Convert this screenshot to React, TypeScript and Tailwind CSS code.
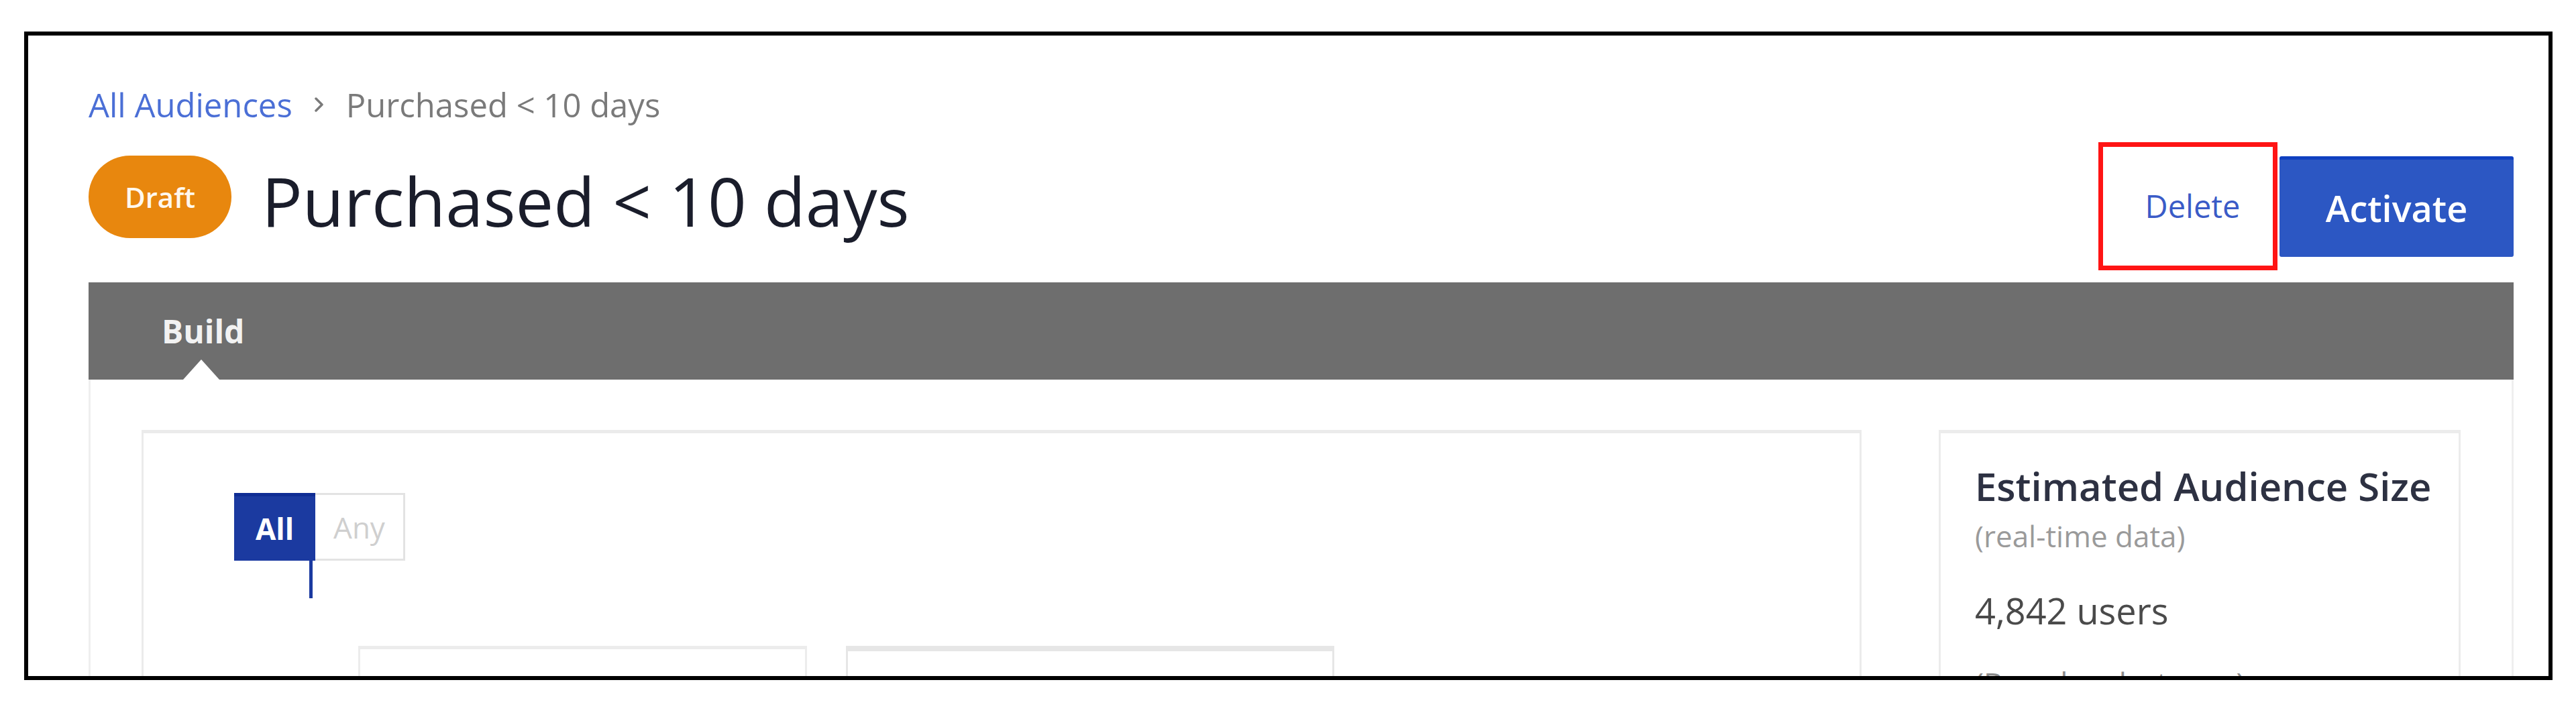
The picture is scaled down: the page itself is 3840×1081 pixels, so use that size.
import React from 'react';

const font = { fontFamily: '"Open Sans", "Liberation Sans", sans-serif' };

function Breadcrumb() {
  return (
    <div className="flex h-[48px] shrink-0 items-center text-[49px] leading-[48px]">
      <span className="text-[#4b6fd6]">All Audiences</span>
      <svg className="mx-[32px] h-[22px] w-[16px]" viewBox="0 0 16 22" fill="none">
        <path d="M3 2l9 9-9 9" stroke="#7a7a7a" strokeWidth="3.5" strokeLinecap="round" strokeLinejoin="round" />
      </svg>
      <span className="text-[#7a7a7a]">Purchased &lt; 10 days</span>
    </div>
  );
}

function HeaderRow() {
  return (
    <div className="mt-[32px] flex h-[191px] shrink-0 items-start justify-between">
      <div className="flex items-start">
        <div className="mt-[20px] flex h-[123px] w-[213px] items-center justify-center rounded-full bg-[#e8870e]">
          <span className="text-[42px] font-semibold leading-none text-[#fff8ee]">Draft</span>
        </div>
        <h1 className="ml-[45px] mt-[37px] text-[101px] font-normal leading-[100px] text-[#1a1d2b]">
          Purchased &lt; 10 days
        </h1>
      </div>
      <div className="flex h-full items-center gap-[3px]">
        {/* highlighted action */}
        <div className="flex h-[191px] w-[267px] items-center justify-center border-[7px] border-[#ff1414]">
          <button className="pl-[14px] text-[47px] leading-none text-[#3a5bc7]">Delete</button>
        </div>
        <button className="flex h-[150px] w-[349px] items-center justify-center rounded-[3px] border-t-[5px] border-[#0f40c0] bg-[#2c57c3] text-[54px] font-semibold leading-none text-white">
          Activate
        </button>
      </div>
    </div>
  );
}

function TabBar() {
  return (
    <div className="relative mt-[18px] flex h-[145px] shrink-0 items-center bg-[#6e6e6e] pl-[109px]">
      <span className="text-[48px] font-bold leading-none text-[#f2f2f2]">Build</span>
      <svg className="absolute bottom-0 left-[141px] h-[30px] w-[54px]" viewBox="0 0 54 30">
        <polygon points="0,30 27,0 54,30" fill="#ffffff" />
      </svg>
    </div>
  );
}

function RuleBuilder() {
  return (
    <div className="h-[600px] flex-1 border-[3px] border-t-[5px] border-[#ebebeb] pl-[135px] pt-[89px]">
      <div className="flex">
        <div className="flex h-[101px] w-[121px] items-center justify-center border-t-[5px] border-[#0f2d94] bg-[#1b3aa0]">
          <span className="text-[44px] font-bold leading-none text-white">All</span>
        </div>
        <div className="flex h-[101px] w-[134px] items-center justify-center border-[3px] border-l-0 border-[#e3e3e3] bg-white">
          <span className="text-[44px] leading-none text-[#cfcfcf]">Any</span>
        </div>
      </div>
      <div className="ml-[112px] h-[56px] w-[5px] bg-[#1b3aa0]" />
      <div className="ml-[185px] mt-[71px] flex gap-[58px]">
        <div className="h-[200px] w-[669px] border-[3px] border-t-[5px] border-[#ececec]" />
        <div className="h-[200px] w-[728px] border-[3px] border-t-[8px] border-[#e6e6e6]" />
      </div>
    </div>
  );
}

function AudienceSize() {
  return (
    <div className="h-[600px] w-[778px] border-[3px] border-t-[5px] border-[#ececec] pl-[51px] pt-[50px]">
      <div className="text-[58px] font-semibold leading-[58px] text-[#2d3142]">Estimated Audience Size</div>
      <div className="mt-[23px] text-[44px] leading-[44px] text-[#9a9a9a]">(real-time data)</div>
      <div className="mt-[62px] text-[54px] leading-[54px] text-[#4a4a4a]">4,842 users</div>
      <div className="mt-[59px] text-[44px] leading-[44px] text-[#8a8a8a]">(Based on last sync)</div>
    </div>
  );
}

export default function App() {
  return (
    <div className="h-[1081px] w-[3840px] bg-white pl-[36px] pt-[47px]" style={font}>
      <div className="flex h-[967px] w-[3769px] flex-col overflow-hidden border-[6px] border-black bg-white pl-[90px] pr-[52px] pt-[79px]">
        <Breadcrumb />
        <HeaderRow />
        <TabBar />
        <div className="flex shrink-0 items-start gap-[115px] border-x-[3px] border-[#efefef] px-[76px] pt-[75px]">
          <RuleBuilder />
          <AudienceSize />
        </div>
      </div>
    </div>
  );
}
